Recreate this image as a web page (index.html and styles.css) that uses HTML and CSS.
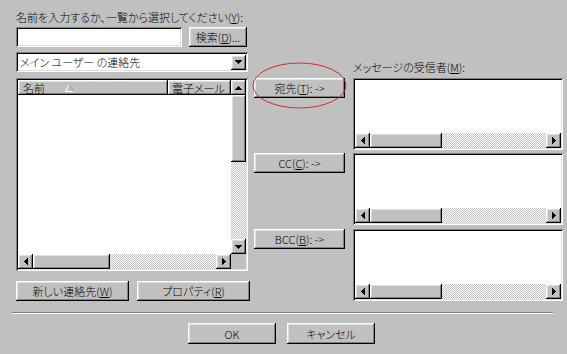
FILE: index.html
```html
<!DOCTYPE html>
<html lang="ja">
<head>
<meta charset="utf-8">
<link rel="stylesheet" href="styles.css">
</head>
<body>
<div class="dialog">
  <div class="main">
    <div class="left">
      <div class="label">名前を入力するか、一覧から選択してください(<u>Y</u>):</div>
      <div class="search-row">
        <div class="field input"></div>
        <div class="btn search-btn">検索(<u>D</u>)...</div>
      </div>
      <div class="field combo">
        <span class="combo-text">メイン ユーザー の連絡先</span>
        <span class="raised sb-btn combo-btn"><svg width="7" height="4"><path d="M0 0h7v1H0zM1 1h5v1H1zM2 2h3v1H2zM3 3h1v1H3z"/></svg></span>
      </div>
      <div class="field list">
        <div class="list-top">
          <div class="list-main">
            <div class="header">
              <div class="raised hcol hcol1">名前<svg class="sort" width="9" height="8"><path d="M4.5 0.5L0.5 7.5h8z" fill="none" stroke="#fff"/><path d="M4.5 0.5L8.5 7.5" stroke="#808080" fill="none"/></svg></div>
              <div class="raised hcol hcol2">電子メール</div>
            </div>
            <div class="list-body"></div>
          </div>
          <div class="vscroll">
            <div class="raised sb-btn"><svg width="7" height="4"><path d="M3 0h1v1H3zM2 1h3v1H2zM1 2h5v1H1zM0 3h7v1H0z"/></svg></div>
            <div class="raised vthumb"></div>
            <div class="track"></div>
            <div class="raised sb-btn"><svg width="7" height="4"><path d="M0 0h7v1H0zM1 1h5v1H1zM2 2h3v1H2zM3 3h1v1H3z"/></svg></div>
          </div>
        </div>
        <div class="hscroll-row">
          <div class="hscroll">
            <div class="raised sb-btn"><svg width="4" height="7"><path d="M3 0h1v7H3zM2 1h1v5H2zM1 2h1v3H1zM0 3h1v1H0z"/></svg></div>
            <div class="raised hthumb"></div>
            <div class="track"></div>
            <div class="raised sb-btn"><svg width="4" height="7"><path d="M0 0h1v7H0zM1 1h1v5H1zM2 2h1v3H2zM3 3h1v1H3z"/></svg></div>
          </div>
          <div class="corner"></div>
        </div>
      </div>
      <div class="bottom-btns">
        <div class="btn wide">新しい連絡先(<u>W</u>)</div>
        <div class="btn wide">プロパティ(<u>R</u>)</div>
      </div>
    </div>

    <div class="middle">
      <div class="btn mid-btn to-btn">宛先(<u>T</u>): -&gt;</div>
      <div class="btn mid-btn cc-btn">CC(<u>C</u>): -&gt;</div>
      <div class="btn mid-btn bcc-btn">BCC(<u>B</u>): -&gt;</div>
      <svg class="circle" width="100" height="50" viewBox="0 0 100 50"><ellipse cx="47.5" cy="24.5" rx="46.5" ry="22.5" fill="none" stroke="#d42a2a" stroke-width="1"/></svg>
    </div>

    <div class="right">
      <div class="label">メッセージの受信者(<u>M</u>):</div>
      <div class="field box">
        <div class="box-body"></div>
        <div class="hscroll">
          <div class="raised sb-btn"><svg width="4" height="7"><path d="M3 0h1v7H3zM2 1h1v5H2zM1 2h1v3H1zM0 3h1v1H0z"/></svg></div>
          <div class="raised hthumb"></div>
          <div class="track"></div>
          <div class="raised sb-btn"><svg width="4" height="7"><path d="M0 0h1v7H0zM1 1h1v5H1zM2 2h1v3H2zM3 3h1v1H3z"/></svg></div>
        </div>
      </div>
      <div class="field box box2">
        <div class="box-body"></div>
        <div class="hscroll">
          <div class="raised sb-btn"><svg width="4" height="7"><path d="M3 0h1v7H3zM2 1h1v5H2zM1 2h1v3H1zM0 3h1v1H0z"/></svg></div>
          <div class="raised hthumb"></div>
          <div class="track"></div>
          <div class="raised sb-btn"><svg width="4" height="7"><path d="M0 0h1v7H0zM1 1h1v5H1zM2 2h1v3H2zM3 3h1v1H3z"/></svg></div>
        </div>
      </div>
      <div class="field box box3">
        <div class="box-body"></div>
        <div class="hscroll">
          <div class="raised sb-btn"><svg width="4" height="7"><path d="M3 0h1v7H3zM2 1h1v5H2zM1 2h1v3H1zM0 3h1v1H0z"/></svg></div>
          <div class="raised hthumb"></div>
          <div class="track"></div>
          <div class="raised sb-btn"><svg width="4" height="7"><path d="M0 0h1v7H0zM1 1h1v5H1zM2 2h1v3H2zM3 3h1v1H3z"/></svg></div>
        </div>
      </div>
    </div>
  </div>

  <div class="separator"></div>

  <div class="footer">
    <div class="btn foot-btn">OK</div>
    <div class="btn foot-btn">キャンセル</div>
  </div>
</div>
</body>
</html>
```

FILE: styles.css
```css
* { box-sizing: border-box; }
html, body { margin: 0; padding: 0; }
body {
  background: #c0c0c0;
  width: 567px;
  height: 354px;
  overflow: hidden;
  font-family: "Noto Sans CJK JP", "Noto Sans", sans-serif;
  font-size: 11px;
  font-weight: 300;
  line-height: 14px;
  color: #000;
  font-feature-settings: "palt";
}
u { text-decoration: underline; text-underline-offset: 1px; }

.dialog { padding-top: 10px; }
.main { display: flex; align-items: flex-start; padding-left: 16px; height: 291px; }

/* 3D styles */
.raised, .btn {
  background: #c0c0c0;
  box-shadow: inset -1px -1px #000, inset 1px 1px #fff, inset -2px -2px #808080, inset 2px 2px #dfdfdf;
}
.btn {
  display: flex;
  align-items: center;
  justify-content: center;
  height: 20px;
  white-space: nowrap;
}
.field {
  background: #fff;
  padding: 2px;
  box-shadow: inset 1px 1px #808080, inset -1px -1px #fff, inset 2px 2px #000, inset -2px -2px #dfdfdf;
}

/* left column */
.left { width: 234px; display: flex; flex-direction: column; }
.label { height: 14px; white-space: nowrap; }
.search-row { display: flex; margin-top: 3px; height: 20px; }
.input { width: 166px; height: 20px; }
.search-btn { width: 58px; margin-left: 7px; }

.combo { margin-top: 5px; width: 232px; height: 20px; display: flex; align-items: center; }
.combo-text { flex: 1; padding-left: 2px; white-space: nowrap; }
.combo-btn { width: 14px; height: 16px; }

.sb-btn {
  width: 15px;
  height: 15px;
  flex: none;
  display: flex;
  align-items: center;
  justify-content: center;
}
.sb-btn svg { display: block; }

.list { margin-top: 6px; width: 232px; height: 193px; display: flex; flex-direction: column; }
.list-top { display: flex; flex: 1; min-height: 0; }
.list-main { flex: 1; display: flex; flex-direction: column; background: #fff; min-width: 0; }
.header { display: flex; height: 15px; flex: none; }
.hcol {
  height: 15px;
  padding-left: 5px;
  overflow: hidden;
  white-space: nowrap;
  display: flex;
  align-items: center;
}
.hcol1 { width: 150px; }
.hcol2 { flex: 1; min-width: 0; padding-left: 4px; }
.sort { margin-left: 20px; display: block; }
.list-body { flex: 1; }

.vscroll { width: 15px; display: flex; flex-direction: column; }
.vthumb { height: 67px; flex: none; }
.track {
  flex: 1;
  background-color: #c0c0c0;
  background-image: repeating-conic-gradient(#fff 0% 25%, #c0c0c0 0% 50%);
  background-size: 2px 2px;
}
.hscroll-row { display: flex; height: 15px; flex: none; }
.hscroll { flex: 1; display: flex; height: 15px; }
.hthumb { width: 77px; flex: none; }
.corner { width: 15px; background: #c0c0c0; }

.bottom-btns { display: flex; gap: 8px; margin-top: 10px; }
.wide { width: 113px; }

/* middle column */
.middle {
  position: relative;
  width: 91px;
  margin-left: 4px;
  padding-top: 68px;
  display: flex;
  flex-direction: column;
}
.mid-btn { width: 91px; }
.cc-btn { margin-top: 55px; }
.bcc-btn { margin-top: 56px; }
.circle { position: absolute; left: -2px; top: 51px; pointer-events: none; }

/* right column */
.right { width: 210px; margin-left: 8px; padding-top: 50px; display: flex; flex-direction: column; }
.right .label { margin-bottom: 4px; }
.box { width: 210px; height: 72px; display: flex; flex-direction: column; }
.box2 { margin-top: 3px; }
.box3 { margin-top: 4px; }
.box-body { flex: 1; background: #fff; }
.box .hscroll { flex: none; }
.box .hthumb { width: 72px; }

/* footer */
.separator {
  margin: 11px 0 0 12px;
  width: 541px;
  height: 2px;
  border-top: 1px solid #808080;
  border-bottom: 1px solid #fff;
}
.footer { display: flex; justify-content: center; gap: 11px; padding-right: 4px; margin-top: 9px; }
.foot-btn { width: 88px; height: 21px; }
```
